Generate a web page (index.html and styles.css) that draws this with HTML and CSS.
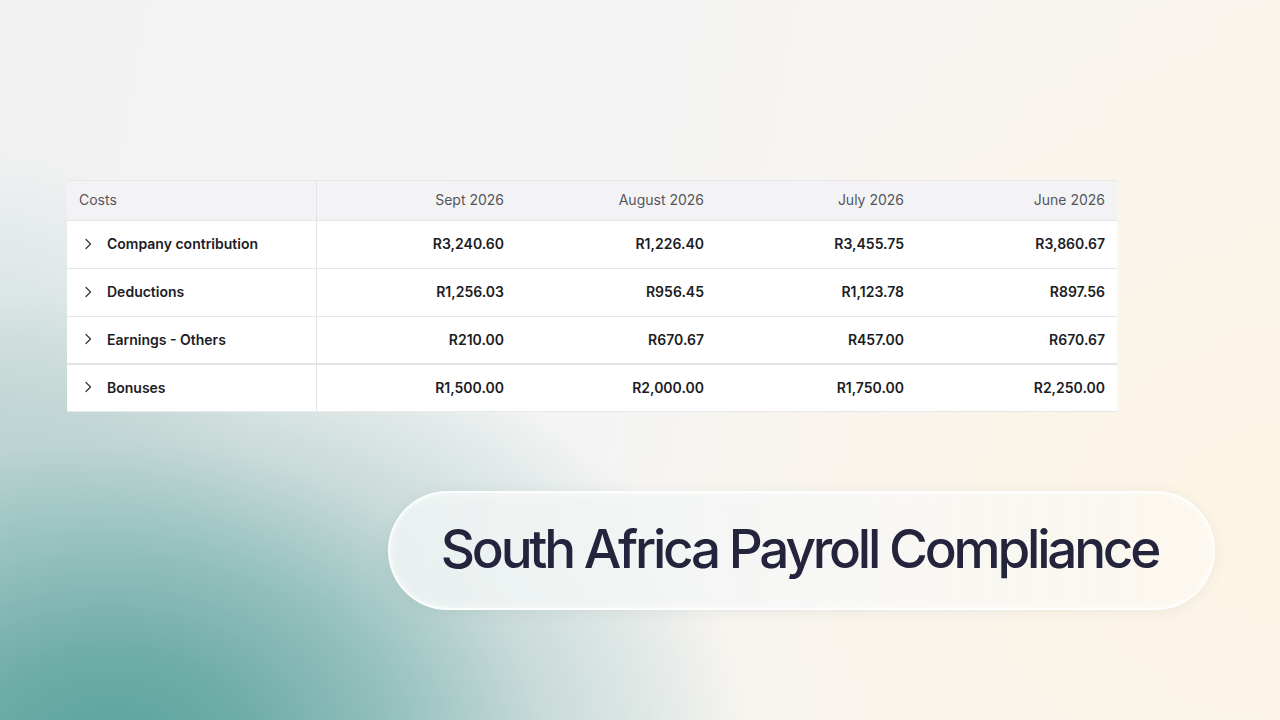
FILE: index.html
```html
<!DOCTYPE html>
<html lang="en">
<head>
<meta charset="utf-8">
<title>South Africa Payroll Compliance</title>
<link rel="stylesheet" href="styles.css">
</head>
<body>
<main class="page">
  <div class="table">
    <div class="row head">
      <div class="cell first">Costs</div>
      <div class="cell num">Sept 2026</div>
      <div class="cell num">August 2026</div>
      <div class="cell num">July 2026</div>
      <div class="cell num">June 2026</div>
    </div>
    <div class="row">
      <div class="cell first"><svg class="chev" viewBox="0 0 8 12"><path d="M2 1.5 L6.5 6 L2 10.5"/></svg><span>Company contribution</span></div>
      <div class="cell num">R3,240.60</div>
      <div class="cell num">R1,226.40</div>
      <div class="cell num">R3,455.75</div>
      <div class="cell num">R3,860.67</div>
    </div>
    <div class="row">
      <div class="cell first"><svg class="chev" viewBox="0 0 8 12"><path d="M2 1.5 L6.5 6 L2 10.5"/></svg><span>Deductions</span></div>
      <div class="cell num">R1,256.03</div>
      <div class="cell num">R956.45</div>
      <div class="cell num">R1,123.78</div>
      <div class="cell num">R897.56</div>
    </div>
    <div class="row thick">
      <div class="cell first"><svg class="chev" viewBox="0 0 8 12"><path d="M2 1.5 L6.5 6 L2 10.5"/></svg><span>Earnings - Others</span></div>
      <div class="cell num">R210.00</div>
      <div class="cell num">R670.67</div>
      <div class="cell num">R457.00</div>
      <div class="cell num">R670.67</div>
    </div>
    <div class="row last">
      <div class="cell first"><svg class="chev" viewBox="0 0 8 12"><path d="M2 1.5 L6.5 6 L2 10.5"/></svg><span>Bonuses</span></div>
      <div class="cell num">R1,500.00</div>
      <div class="cell num">R2,000.00</div>
      <div class="cell num">R1,750.00</div>
      <div class="cell num">R2,250.00</div>
    </div>
  </div>
  <div class="pill">
    <h1 class="title">South Africa Payroll Compliance</h1>
  </div>
</main>
</body>
</html>
```
FILE: styles.css
```css
* { box-sizing: border-box; }
html, body { margin: 0; padding: 0; }
body {
  width: 1280px;
  height: 720px;
  overflow: hidden;
  font-family: Inter, "Noto Sans", sans-serif;
  background:
    radial-gradient(ellipse 640px 470px at 110px 760px, #5aa29d 0%, #6eaca7 22%, #94c0bd 45%, rgba(185,210,208,0.75) 68%, rgba(215,226,225,0) 100%),
    radial-gradient(ellipse 260px 420px at 0px 560px, rgba(140,185,180,0.6) 0%, rgba(170,200,198,0) 100%),
    radial-gradient(ellipse 700px 560px at 1280px 520px, rgba(253,244,228,1) 0%, rgba(252,245,233,0.7) 50%, rgba(250,246,240,0) 100%),
    linear-gradient(100deg, #f2f2f3 0%, #f4f4f4 45%, #fbf5ec 100%);
}
.page {
  width: 1280px;
  height: 720px;
  padding: 180px 0 0 67px;
  display: flex;
  flex-direction: column;
  align-items: flex-start;
}
.table {
  width: 1050px;
  background: #fff;
  display: flex;
  flex-direction: column;
}
.row {
  display: grid;
  grid-template-columns: 250px 199px 200px 200px 201px;
  height: 48px;
  border-bottom: 1px solid #e6e6e8;
}
.row.head {
  height: 41px;
  background: #f3f3f5;
  border-top: 1px solid #e8e8ea;
}
.row.thick { border-bottom: 2px solid #e4e4e6; }
.row.last { border-bottom: 1px solid #e8e8ea; height: 47px; }
.cell {
  display: flex;
  align-items: center;
  font-size: 14px;
  color: #1c1c24;
  font-weight: 600;
  padding: 0 12px 2px;
}
.head .cell { color: #55565c; font-weight: 400; }
.cell.first {
  border-right: 1px solid #e4e4e6;
  gap: 15px;
}
.cell.num { justify-content: flex-end; }
.chev {
  width: 8px;
  height: 12px;
  margin-left: 5px;
  fill: none;
  stroke: #3a3a42;
  stroke-width: 1.3;
  stroke-linecap: round;
  stroke-linejoin: round;
}
.pill {
  margin: 79px 0 0 321px;
  width: 827px;
  height: 119px;
  border-radius: 60px;
  background: linear-gradient(90deg, rgba(238,243,243,0.9) 0%, rgba(246,247,246,0.88) 50%, rgba(252,248,240,0.82) 100%);
  border: 2px solid rgba(255,255,255,0.85);
  box-shadow: 0 2px 14px rgba(120,140,140,0.12), inset 0 0 6px rgba(255,255,255,0.7);
  display: flex;
  align-items: center;
  justify-content: center;
}
.title {
  margin: 0;
  font-family: Inter, "Noto Sans", sans-serif;
  font-weight: 500;
  font-size: 53px;
  letter-spacing: -3.2px;
  color: #25243d;
  line-height: 1;
  padding: 0 4px 2px 0;
}
```
